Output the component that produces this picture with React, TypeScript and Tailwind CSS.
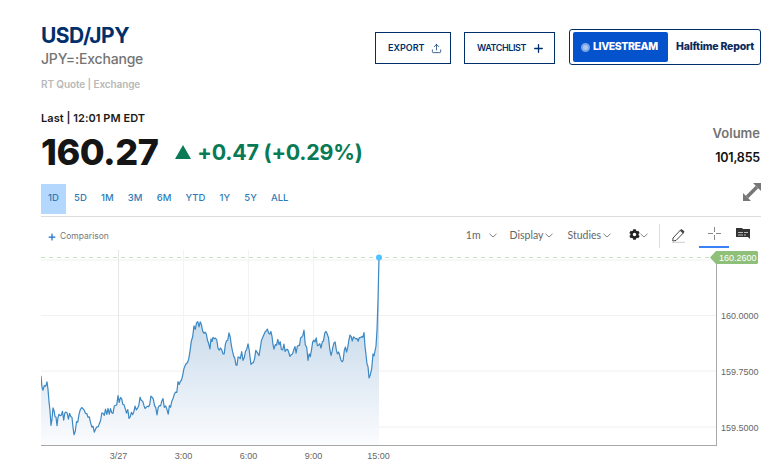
import { Plus, Upload } from "lucide-react";
import { FaCog } from "react-icons/fa";

const ranges = ["1D", "5D", "1M", "3M", "6M", "YTD", "1Y", "5Y", "ALL"];

// rough trace of the price line in page coords
const trace: [number, number][] = [
  [41, 380], [43, 387], [47, 386], [49, 400], [51, 421], [53, 410], [55, 416], [57, 425], [59, 415], [66, 416], [72, 415],
  [74, 436], [79, 413], [83, 411], [88, 417], [93, 430], [97, 428], [103, 412], [113, 413], [118, 399], [124, 405],
  [129, 416], [140, 401], [144, 408], [152, 398], [157, 414], [163, 399], [167, 412], [173, 403], [178, 384], [185, 369],
  [190, 354], [194, 328], [199, 324], [205, 333], [210, 345], [213, 334], [223, 357], [229, 332], [236, 366], [239, 353],
  [243, 357], [248, 347], [251, 365], [257, 349], [259, 356], [264, 332], [272, 334], [274, 349], [279, 342], [290, 356],
  [295, 351], [304, 334], [308, 360], [315, 338], [321, 349], [326, 331], [331, 353], [334, 341], [342, 361], [350, 338],
  [357, 342], [364, 336], [367, 362], [369, 379], [373, 357], [376, 346], [377, 330], [378, 300], [379, 258],
];

function buildLine() {
  const pts: [number, number][] = [];
  let seed = 4211;
  const rand = () => {
    seed = (seed * 16807) % 2147483647;
    return seed / 2147483647 - 0.5;
  };
  for (let i = 0; i < trace.length - 1; i++) {
    const [x0, y0] = trace[i];
    const [x1, y1] = trace[i + 1];
    const steps = Math.max(1, Math.round((x1 - x0) / 1.2));
    for (let s = 0; s < steps; s++) {
      const t = s / steps;
      const noisy = x0 < 375;
      pts.push([x0 + (x1 - x0) * t - 41, y0 + (y1 - y0) * t - 245 + (noisy ? rand() * 9 : 0)]);
    }
  }
  pts.push([338, 13]);
  return pts;
}

const line = buildLine();
const linePts = line.map(([x, y]) => `${x.toFixed(1)},${y.toFixed(1)}`).join(" ");
const areaPts = `0,200 ${linePts} 338,200`;

const Chev = () => (
  <svg width="8" height="5" viewBox="0 0 8 5" fill="none" stroke="#777777" strokeWidth="0.9">
    <path d="M0.500 0.800 4 4 7.500 0.800" />
  </svg>
);

function PriceChart() {
  return (
    <svg width="730" height="211" viewBox="0 4 730 211" className="block">
      <defs>
        <linearGradient id="area" gradientUnits="userSpaceOnUse" x1="0" y1="70" x2="0" y2="200">
          <stop offset="0" stopColor="#c6d9ea" />
          <stop offset="1" stopColor="#fbfcfe" />
        </linearGradient>
      </defs>
      {[15, 70.5, 126, 182].map((y) => (
        <line key={y} x1="0" x2="675" y1={y} y2={y} stroke="#f0f0f0" />
      ))}
      {[77.5, 142.5, 207.5, 272.5, 337.5].map((x) => (
        <line key={x} x1={x} x2={x} y1="5" y2="200" stroke={x === 77.5 ? "#e6e6e6" : "#f3f3f3"} />
      ))}
      <polygon points={areaPts} fill="url(#area)" />
      <polyline points={linePts} fill="none" stroke="#3c88c3" strokeWidth="1.2" strokeLinejoin="round" />
      <line x1="0" x2="670" y1="12.5" y2="12.5" stroke="#c6e4bd" strokeDasharray="4 4" />
      <circle cx="338" cy="12.5" r="3" fill="#4fc3ff" />
      <line x1="0" x2="675.5" y1="200.5" y2="200.5" stroke="#a8a8a8" />
      <line x1="675.5" x2="675.5" y1="15" y2="201" stroke="#a8a8a8" />
      <polygon points="669,12.500 675,6 716,6 717,7 717,18 716,19 675,19" fill="#8fc07a" />
      <g fontFamily="'Liberation Sans', sans-serif" fontSize="9" fill="#666666">
        <text x="678" y="16" fill="#ffffff">160.2600</text>
        <text x="680" y="74">160.0000</text>
        <text x="680" y="129.500">159.7500</text>
        <text x="680" y="185.500">159.5000</text>
        <text x="77.500" y="213.500" textAnchor="middle">3/27</text>
        <text x="142.500" y="213.500" textAnchor="middle">3:00</text>
        <text x="207.500" y="213.500" textAnchor="middle">6:00</text>
        <text x="272.500" y="213.500" textAnchor="middle">9:00</text>
        <text x="337.500" y="213.500" textAnchor="middle">15:00</text>
      </g>
    </svg>
  );
}

const App = () => {
  return (
    <div className="w-[771px] h-[460px] overflow-hidden bg-white pl-[41px] font-['Inter',sans-serif]">
      <div className="flex justify-between pr-[10px] pt-[25px]">
        <div>
          <h1 className="text-[21px] leading-[22px] font-bold text-[#002f6c] tracking-[-0.5px]">USD/JPY</h1>
          <p className="mt-[2px] text-[14px] leading-[20px] font-medium text-[#747474] tracking-[-0.2px]">JPY=:Exchange</p>
          <p className="mt-[8px] text-[10px] leading-[14px] font-semibold text-[#b8b8b8] tracking-[-0.1px]">RT Quote | Exchange</p>
        </div>
        <div className="flex items-start gap-[13px] pt-[4px]">
          <button className="flex items-center gap-[7px] w-[76px] h-[32px] mt-[3px] pl-[12px] border border-[#002f6c] text-[9px] font-semibold text-[#002f6c]">
            EXPORT
            <Upload size={11} strokeWidth={1.6} />
          </button>
          <button className="flex items-center gap-[6px] w-[91px] h-[32px] mt-[3px] pl-[12px] border border-[#002f6c] text-[9px] font-semibold text-[#002f6c] tracking-[-0.4px]">
            WATCHLIST
            <Plus size={13} strokeWidth={2.4} />
          </button>
          <div className="flex items-center w-[192px] h-[36px] ml-[1px] rounded-[3px] border border-[#002f6c] pl-[3px]">
            <div className="flex items-center gap-[3px] w-[95px] h-[30px] pl-[8px] rounded-[2px] bg-[#0452cc] text-[10.5px] font-extrabold text-white tracking-[-0.4px]">
              <span className="w-[9px] h-[9px] rounded-full bg-[#a9c6f2] border-[2px] border-[#7ca5e8]" />
              LIVESTREAM
            </div>
            <span className="ml-[8px] text-[10.5px] font-extrabold text-[#0b2a5b] tracking-[-0.2px] whitespace-nowrap">Halftime Report</span>
          </div>
        </div>
      </div>

      <div className="flex justify-between items-start pr-[11px] mt-[20px]">
        <div>
          <p className="text-[11px] leading-[14px] font-semibold text-[#1a1a1a] tracking-[0.05px]">Last | 12:01 PM EDT</p>
          <div className="flex items-center mt-[4px]">
            <span className="text-[36px] leading-[46px] font-extrabold text-[#151515] tracking-[-0.5px]">160.27</span>
            <span className="ml-[17px] w-0 h-0 border-x-[8px] border-x-transparent border-b-[14px] border-b-[#087a55]" />
            <span className="ml-[6px] text-[21.4px] leading-[46px] font-bold text-[#087a55] tracking-[-0.2px]">+0.47 (+0.29%)</span>
          </div>
        </div>
        <div className="mt-[13px] text-right">
          <p className="text-[13px] leading-[18px] font-semibold text-[#747474]">Volume</p>
          <p className="mt-[7px] text-[12.5px] leading-[18px] font-semibold text-[#111111] tracking-[-0.2px]">101,855</p>
        </div>
      </div>

      <div className="relative flex items-center h-[31px] mt-[8px] mr-[10px] text-[9.5px] font-medium text-[#2f7cb8]">
        {ranges.map((r, i) => (
          <span key={r} className={i === 0 ? "flex items-center justify-center w-[25px] h-[30px] bg-[#b3d7fd] mr-[1px]" : "px-[7.1px] h-[30px] flex items-center"}>
            {r}
          </span>
        ))}
        <svg width="18" height="18" viewBox="0 0 18 18" className="absolute right-0 top-0" fill="#777777" stroke="none">
          <path d="M10 0h8v8z" />
          <path d="M0 10v8h8z" />
          <path d="M4 14 14 4" stroke="#777777" strokeWidth="3.500" />
        </svg>
      </div>

      <div className="mr-[10px] mt-[2px] h-px bg-[#dddddd]" />

      <div className="flex items-start h-[32px] pr-[20px] text-[#666666]">
        <div className="flex items-center h-[31px] pt-[8px]">
          <Plus size={10} strokeWidth={3} className="ml-[6px] text-[#1a6fd0]" />
          <span className="ml-[3px] text-[8.5px] text-[#777777]">Comparison</span>
        </div>
        <div className="ml-auto flex items-center h-[31px] pt-[6px] font-['Lato',sans-serif] text-[10.5px] text-[#666666]">
          <span>1m</span>
          <span className="ml-[8px]"><Chev /></span>
          <span className="ml-[13px]">Display</span>
          <span className="ml-[2px]"><Chev /></span>
          <span className="ml-[14px]">Studies</span>
          <span className="ml-[2px]"><Chev /></span>
          <FaCog size={11} className="ml-[18px] mb-[3px] text-[#222222]" />
          <Chev />
          <span className="ml-[11px] w-px h-[24px] bg-[#dddddd]" />
          <svg width="15" height="15" viewBox="0 0 15 15" className="ml-[11px]" fill="none">
            <path d="M2 10 9.500 2 12.500 4.800 5 12.500 1.800 13z" stroke="#444444" strokeWidth="1" />
            <path d="M9 2.800 10.500 1 13.500 3.600 12 5.500z" fill="#444444" />
            <path d="M1 14.300h13" stroke="#cccccc" />
          </svg>
          <div className="flex justify-center items-center -mt-[6px] ml-[13px] w-[30px] h-[31px] pt-[4px] border-b-2 border-[#3b82f6]">
            <svg width="13" height="13" viewBox="0 0 13 13" stroke="#888888" fill="none">
              <path d="M6.500 0v5M6.500 8v5M0 6.500h5M8 6.500h5" />
            </svg>
          </div>
          <svg width="15" height="12" viewBox="0 0 15 12" className="ml-[7px] mb-[3px]" fill="#333333">
            <path d="M0 0h6l1 1h7v10l-2-2H0z" />
            <path d="M2 4h5v1H2zM8 4h4v1H8zM2 6.500h5v1H2zM8 6.500h2v1H8z" fill="#bbbbbb" />
          </svg>
        </div>
      </div>

      <PriceChart />
    </div>
  );
};

export default App;
